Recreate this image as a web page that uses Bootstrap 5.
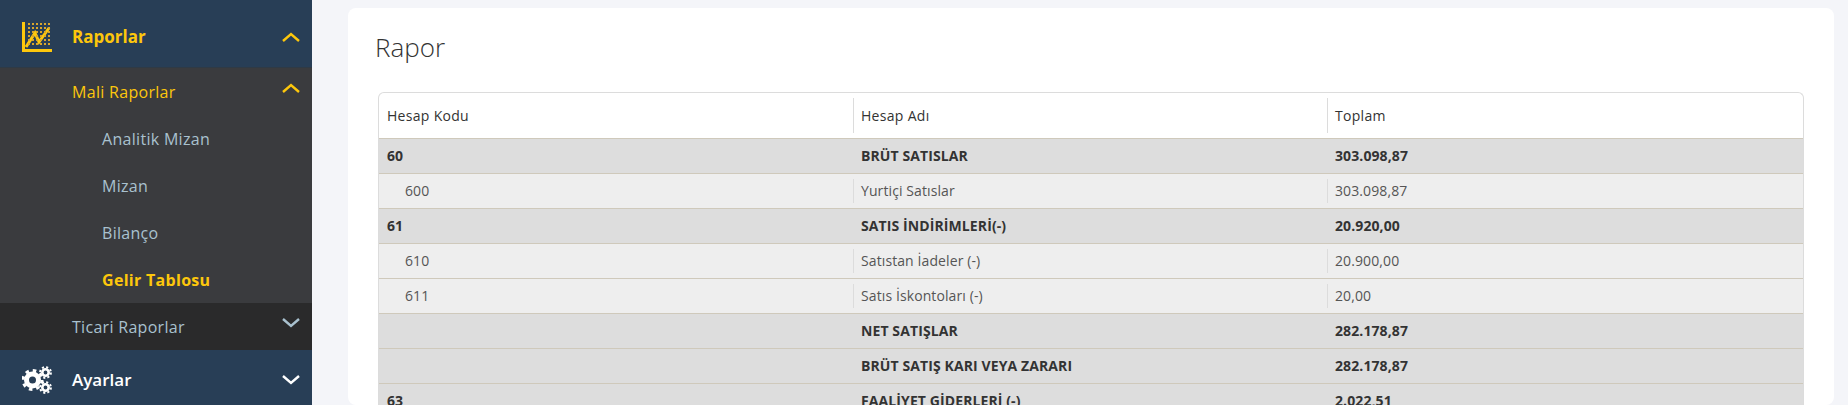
<!DOCTYPE html>
<html lang="tr">
<head>
<meta charset="UTF-8">
<meta name="viewport" content="width=device-width, initial-scale=1.0">
<link href="https://cdn.jsdelivr.net/npm/bootstrap@5.3.3/dist/css/bootstrap.min.css" rel="stylesheet">
<title>Rapor</title>
<style>
html, body { height: 405px; overflow: hidden; }
body { background: #f4f5f9; font-family: "Open Sans", sans-serif; color: #333; }
.yan-menu { width: 312px; flex: none; font-size: 16px; letter-spacing: .3px; }
.yan-menu a { text-decoration: none; display: flex; align-items: center; }
.ana-link { background: #283e56; color: #fff; font-size: 17px; font-weight: 600; letter-spacing: 0; padding-left: 22px; }
.ana-link.acik { color: #fdc70c; font-weight: 700; height: 68px; padding-top: 6px; border-bottom: 1px solid #2f3a45; }
.ana-link.kapali { height: 60px; }
.ana-ikon { margin-right: 20px; flex: none; }
.ok { margin-left: auto; margin-right: 12px; }
.ok-yukari { margin-bottom: 7px; }
.alt-grup { background: #3a3b3e; }
.alt-baslik { height: 47px; padding-left: 72px; color: #fdc70c; }
.alt-baslik.kapali { background: #2a2a2b; color: #a9c1cf; }
.alt-link { height: 47px; padding-left: 102px; color: #a9c1cf; }
.alt-link.secili { color: #fdc70c; font-weight: 700; }
.icerik { flex: 1; padding: 8px 14px 0 36px; min-width: 0; }
.rapor-kutu { background: #fff; border-radius: 8px; padding: 0 30px; height: 397px; overflow: hidden; }
.rapor-baslik { font-size: 26px; font-weight: 300; margin: 0 0 0 -3px; padding-top: 23px; height: 84px; line-height: 33px; color: #333; }
.tablo-kutu { border: 1px solid #dcdcdc; border-bottom: 0; border-radius: 6px 6px 0 0; overflow: hidden; }
.rapor-tablo { width: 100%; table-layout: fixed; font-size: 14px; letter-spacing: .1px; margin: 0; border-collapse: collapse; }
.rapor-tablo th { font-weight: 500; letter-spacing: .3px; height: 45px; padding: 0 0 0 8px; color: #333; position: relative; border-bottom: 1px solid #cfc9bb; }
.rapor-tablo th:nth-child(-n+2) { width: 474px; }
.rapor-tablo td { height: 35px; padding: 1px 0 0 8px; border-bottom: 1px solid #cfc9bb; position: relative; line-height: 1; }
.rapor-tablo th + th::before, .alt-satir td + td::before { content: ""; position: absolute; left: 0; top: 5px; bottom: 5px; width: 1px; background: #dcdcdc; }
.ust-satir td { background: #ddd; font-weight: 700; color: #333; }
.alt-satir td { background: #eee; color: #555; }
.alt-satir td:first-child { padding-left: 26px; }
</style>
</head>
<body>
<div class="d-flex">

<!--MENU-->
<nav class="yan-menu">
  <a class="ana-link acik" href="#">
    <svg class="ana-ikon" width="30" height="30" viewBox="0 0 30 30">
      <path d="M0 0h3v27h27v3H0z" fill="#fdc70c"/>
      <path d="M4 25l9-14 4 9 10-14" fill="none" stroke="#fdc70c" stroke-width="3"/>
      <path d="M6 2h24M6 6h24M6 10h24M6 14h24M6 18h24M6 22h24" stroke="#d9a52c" stroke-width="2" stroke-dasharray="2 2" fill="none"/>
    </svg>
    Raporlar
    <svg class="ok" width="18" height="10" viewBox="0 0 18 10"><path d="M1 9l8-7 8 7" fill="none" stroke="#fdc70c" stroke-width="2.4"/></svg>
  </a>
  <div class="alt-grup">
    <a class="alt-baslik" href="#">Mali Raporlar
      <svg class="ok ok-yukari" width="18" height="10" viewBox="0 0 18 10"><path d="M1 9l8-7 8 7" fill="none" stroke="#fdc70c" stroke-width="2.4"/></svg>
    </a>
    <a class="alt-link" href="#">Analitik Mizan</a>
    <a class="alt-link" href="#">Mizan</a>
    <a class="alt-link" href="#">Bilanço</a>
    <a class="alt-link secili" href="#">Gelir Tablosu</a>
    <a class="alt-baslik kapali" href="#">Ticari Raporlar
      <svg class="ok ok-yukari" width="18" height="10" viewBox="0 0 18 10"><path d="M1 1l8 7 8-7" fill="none" stroke="#a9c1cf" stroke-width="2.4"/></svg>
    </a>
  </div>
  <a class="ana-link kapali" href="#">
    <svg class="ana-ikon" width="30" height="28" viewBox="0 0 30 28">
      <g fill="none" stroke="#fff">
        <circle cx="10.5" cy="14" r="6" stroke-width="5"/>
        <circle cx="10.5" cy="14" r="9.5" stroke-width="3" stroke-dasharray="3.5 3.96"/>
        <circle cx="23.5" cy="6.5" r="3.2" stroke-width="2.6"/>
        <circle cx="23.5" cy="6.5" r="5.4" stroke-width="2" stroke-dasharray="2.1 2.14"/>
        <circle cx="23.5" cy="21.5" r="3.2" stroke-width="2.6"/>
        <circle cx="23.5" cy="21.5" r="5.4" stroke-width="2" stroke-dasharray="2.1 2.14"/>
      </g>
    </svg>
    Ayarlar
    <svg class="ok" width="18" height="10" viewBox="0 0 18 10"><path d="M1 1l8 7 8-7" fill="none" stroke="#fff" stroke-width="2.4"/></svg>
  </a>
</nav>

<!--ICERIK-->
<main class="icerik">
  <div class="rapor-kutu">
    <h1 class="rapor-baslik">Rapor</h1>
    <div class="tablo-kutu">
      <table class="rapor-tablo">
        <thead>
          <tr><th>Hesap Kodu</th><th>Hesap Adı</th><th>Toplam</th></tr>
        </thead>
        <tbody>
          <tr class="ust-satir"><td>60</td><td>BRÜT SATISLAR</td><td>303.098,87</td></tr>
          <tr class="alt-satir"><td>600</td><td>Yurtiçi Satıslar</td><td>303.098,87</td></tr>
          <tr class="ust-satir"><td>61</td><td>SATIS İNDİRİMLERİ(-)</td><td>20.920,00</td></tr>
          <tr class="alt-satir"><td>610</td><td>Satıstan İadeler (-)</td><td>20.900,00</td></tr>
          <tr class="alt-satir"><td>611</td><td>Satıs İskontoları (-)</td><td>20,00</td></tr>
          <tr class="ust-satir"><td></td><td>NET SATIŞLAR</td><td>282.178,87</td></tr>
          <tr class="ust-satir"><td></td><td>BRÜT SATIŞ KARI VEYA ZARARI</td><td>282.178,87</td></tr>
          <tr class="ust-satir"><td>63</td><td>FAALİYET GİDERLERİ (-)</td><td>2.022,51</td></tr>
        </tbody>
      </table>
    </div>
  </div>
</main>

</div>
<script src="https://cdn.jsdelivr.net/npm/bootstrap@5.3.3/dist/js/bootstrap.bundle.min.js"></script>
</body>
</html>
